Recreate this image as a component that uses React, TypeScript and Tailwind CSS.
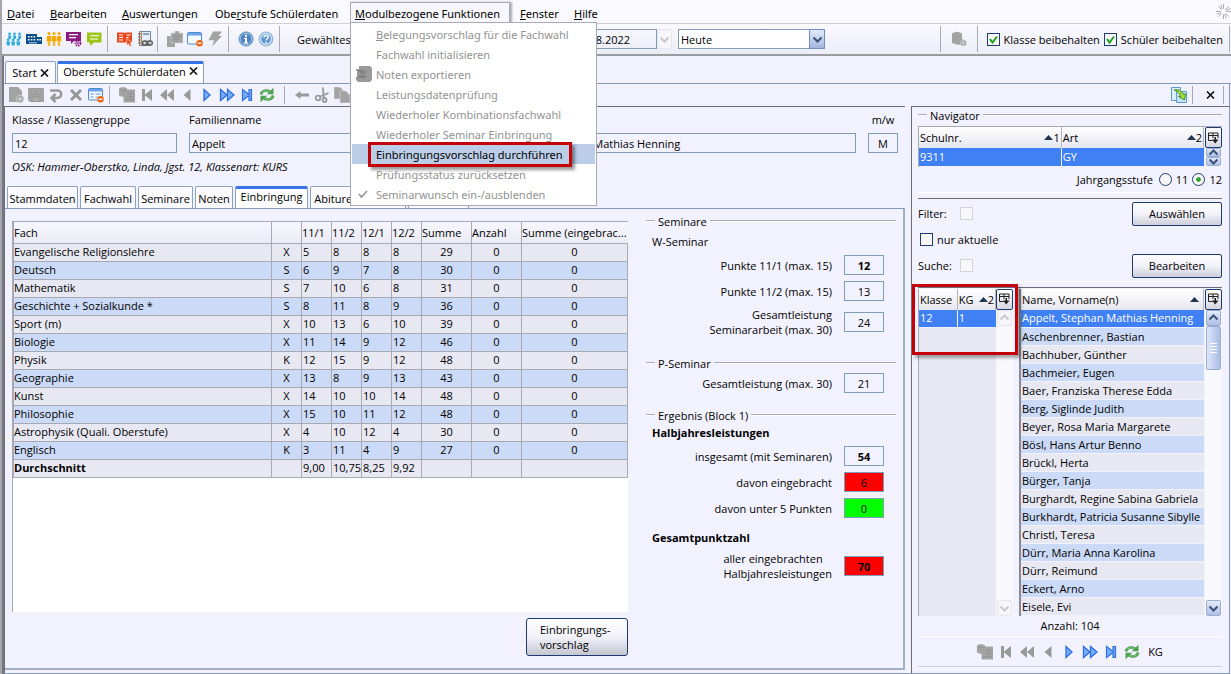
import type { ReactNode } from 'react';
import clsx from 'clsx';

const menus = [
  { name: 'Datei', width: 'w-[43px]' },
  { name: 'Bearbeiten', width: 'w-[72px]' },
  { name: 'Auswertungen', width: 'w-[93px]' },
  { name: 'Oberstufe Schülerdaten', width: 'w-[140px]' },
  { name: 'Modulbezogene Funktionen', width: 'w-[160px]' },
  { name: 'Fenster', width: 'w-[54px]' },
  { name: 'Hilfe', width: 'w-[40px]' },
];

const menuItems = [
  'Belegungsvorschlag für die Fachwahl',
  'Fachwahl initialisieren',
  'Noten exportieren',
  'Leistungsdatenprüfung',
  'Wiederholer Kombinationsfachwahl',
  'Wiederholer Seminar Einbringung',
  'Einbringungsvorschlag durchführen',
  'Prüfungsstatus zurücksetzen',
  'Seminarwunsch ein-/ausblenden',
];

const subjects: [string, string, number, number, number, number, number][] = [
  ['Evangelische Religionslehre', 'X', 5, 8, 8, 8, 29],
  ['Deutsch', 'S', 6, 9, 7, 8, 30],
  ['Mathematik', 'S', 7, 10, 6, 8, 31],
  ['Geschichte + Sozialkunde *', 'S', 8, 11, 8, 9, 36],
  ['Sport (m)', 'X', 10, 13, 6, 10, 39],
  ['Biologie', 'X', 11, 14, 9, 12, 46],
  ['Physik', 'K', 12, 15, 9, 12, 48],
  ['Geographie', 'X', 13, 8, 9, 13, 43],
  ['Kunst', 'X', 14, 10, 10, 14, 48],
  ['Philosophie', 'X', 15, 10, 11, 12, 48],
  ['Astrophysik (Quali. Oberstufe)', 'X', 4, 10, 12, 4, 30],
  ['Englisch', 'K', 3, 11, 4, 9, 27],
];

const students = [
  'Appelt, Stephan Mathias Henning',
  'Aschenbrenner, Bastian',
  'Bachhuber, Günther',
  'Bachmeier, Eugen',
  'Baer, Franziska Therese Edda',
  'Berg, Siglinde Judith',
  'Beyer, Rosa Maria Margarete',
  'Bösl, Hans Artur Benno',
  'Brückl, Herta',
  'Bürger, Tanja',
  'Burghardt, Regine Sabina Gabriela',
  'Burkhardt, Patricia Susanne Sibylle',
  'Christl, Teresa',
  'Dürr, Maria Anna Karolina',
  'Dürr, Reimund',
  'Eckert, Arno',
  'Eisele, Evi',
];

const GREY = '#a3a3a3';
const BLUE = '#2f6fe0';

const people = (color: string) => (
  <g fill={color}>
    {[3, 8, 13].map((x) => (
      <g key={x}>
        <circle cx={x} cy="2.5" r="1.5" />
        <path d={`M${x - 2} 5h4l.4 5h-1l-.4 5h-.8v-5h-.4v5h-.8l-.4-5h-1z`} />
      </g>
    ))}
  </g>
);

const windowMinus = (
  <>
    <rect x=".5" y="1.5" width="14" height="11.5" rx="1" fill="#f4f9ff" stroke="#4d8ad0" />
    <path d="M1 2h13v2.5H1z" fill="#6ba4e6" />
    <circle cx="12.5" cy="12.2" r="3.3" fill="#ea6413" />
    <path d="M10.5 11.6h4v1.2h-4z" fill="#fff" />
  </>
);

const icons: Record<string, ReactNode> = {
  team: (
    <g fill="#27a9dc">
      {[3, 8, 13].map((x) => (
        <g key={x}>
          <circle cx={x + 0.5} cy="2.8" r="1.3" />
          <path d={`M${x - 1} 4.5h3.2l-.5 3.5h-2z`} />
          <circle cx={x - 0.8} cy="8.8" r="1.4" />
          <path d={`M${x - 2.8} 10.5h4l-.6 4h-2.6z`} />
        </g>
      ))}
    </g>
  ),
  school: (
    <>
      <path d="M0 3h11v3h5v7H0z" fill="#074d8c" />
      <path d="M2 5h1.6v1.6H2zM4.8 5h1.6v1.6H4.8zM7.6 5h1.6v1.6H7.6zM2 8h1.6v1.6H2zM4.8 8h1.6v1.6H4.8zM7.6 8h1.6v1.6H7.6zM11 8h1.6v1.6H11zM13.4 8H15v1.6h-1.6zM3 11.5h8v.8H3z" fill="#fff" />
    </>
  ),
  parents: people('#f5a800'),
  chatGear: (
    <>
      <path d="M0 1h15v9H8l-3 3v-3H0z" fill="#8b1a83" />
      <path d="M3 3.6h9M3 6.6h7" stroke="#fff" strokeWidth="1.1" />
      <circle cx="12" cy="12.2" r="2.5" fill="none" stroke="#8b1a83" strokeWidth="1.8" strokeDasharray="1.5 .8" />
      <circle cx="12" cy="12.2" r="1.3" fill="#b45bae" />
    </>
  ),
  chat: (
    <>
      <path d="M1 1.5h14.5v10H8l-4 3.5v-3.5H1z" fill="#9dc419" />
      <path d="M4 4.8h9M4 8h8" stroke="#fff" strokeWidth="1.1" />
    </>
  ),
  book: (
    <>
      <path d="M0 1.5h7l.8.8.8-.8H15v10H0z" fill="#e8481b" />
      <path d="M2 4h4M2 6.5h4M2 9h4M9.5 4h4M9.5 6.5h2" stroke="#fff" />
      <path d="m9.5 7.5 6 4-2.4.6 1.4 2.6-1.7.8-1.4-2.6-1.6 1.7z" fill="#e8481b" stroke="#fff" strokeWidth=".5" />
    </>
  ),
  notebook: (
    <>
      <path d="M2.5.5h11v14h-11z" fill="#e7edf4" stroke="#72839b" />
      <path d="M4.5 1v13" stroke="#b08a60" />
      <path d="M1 3h3M1 6h3M1 9h3M1 12h3" stroke="#956339" strokeWidth="1.2" />
      <path d="M6 3h6" stroke="#6787a8" strokeWidth="1.5" />
      <rect x="5.5" y="10" width="5" height="4" rx="2" fill="#ddd" stroke="#555" strokeWidth="1.3" />
      <rect x="10.3" y="10" width="5" height="4" rx="2" fill="#ddd" stroke="#555" strokeWidth="1.3" />
      <path d="M8.5 12h4" stroke="#555" />
    </>
  ),
  cards: (
    <g fill={GREY}>
      <path d="M0 5h8v11H0z" />
      <path d="M4 2h4V0h4v2h4v10H4z" stroke="#d4d4dc" strokeWidth=".5" />
      <path d="M6 5h8M6 8h6" stroke="#8d8d8d" />
    </g>
  ),
  windowMinus,
  bolt: <path d="M6 .5h9L11.5 5H15L5 15.5l2.2-6.2H1.5z" fill={GREY} />,
  info: (
    <>
      <circle cx="8" cy="8" r="7.2" fill="#4e85c0" stroke="#8fb3d9" />
      <circle cx="8" cy="8" r="5.7" fill="none" stroke="#b6d0ec" strokeWidth=".8" />
      <path d="M7 3.8h2v2H7zM6.2 6.8H9v4.5h1v1.2H6v-1.2h1V8h-.8z" fill="#fff" />
    </>
  ),
  help: (
    <>
      <circle cx="8" cy="8" r="7" fill="#a9c8ea" stroke="#8fb3d9" />
      <circle cx="8" cy="8" r="5.3" fill="#5f97d2" stroke="#e3eefa" />
      <path d="M6 6.5c0-2.8 4.2-2.6 4.2-.2C10.2 7.8 8 7.8 8 9.6" fill="none" stroke="#fff" strokeWidth="1.4" />
      <circle cx="8" cy="11.6" r=".9" fill="#fff" />
    </>
  ),
  newDoc: (
    <g fill={GREY}>
      <path d="M1 0h9l4 4v7l-3 4H1z" />
      <circle cx="12" cy="12" r="3.7" stroke="#ddd" strokeWidth=".6" />
      <path d="M12 10v4M10 12h4" stroke="#e4e4ec" />
    </g>
  ),
  save: (
    <>
      <path d="M0 1h16v14H2l-2-2z" fill={GREY} />
      <path d="M3 1.5h10V7H3zM4 10h8v4.5H4z" fill="#adadad" stroke="#8f8f8f" strokeWidth=".7" />
      <path d="M4.5 3.2h7M4.5 5h7" stroke="#8f8f8f" strokeWidth=".7" />
    </>
  ),
  undo: <path d="M2 3.5h7.5a3.7 3.7 0 0 1 0 7.5H4M7.5 7l-4 4 4 4" fill="none" stroke="#9a9a9a" strokeWidth="2.6" />,
  remove: <path d="m3 3 10 10M13 3 3 13" stroke="#949494" strokeWidth="2.9" />,
  formMinus: (
    <>
      {windowMinus}
      <path d="M2.5 7h3M2.5 10h3M7.5 7h5M7.5 10h2" stroke="#5e94d5" />
    </>
  ),
  dbTable: (
    <>
      <path d="M5 2.5h11v13H4.5V9z" fill={GREY} />
      <path d="M8.5 6.5H15M8.5 9.5H15M6 12.5h9M11.500 5v9" stroke="#8f8f8f" strokeWidth=".7" />
      <path d="M0 2C0-.3 8-.3 8 2v6c0 2.3-8 2.3-8 0z" fill={GREY} />
      <path d="M.5 2.5c1 1.500 6 1.500 7 0" fill="none" stroke="#8c8c8c" strokeWidth=".7" />
    </>
  ),
  first: <path d="M3 2h3v5.5L13 2v12L6 8.5V14H3z" fill="#999" />,
  fastBack: <path d="M8 2v12L1 8zM15 2v12L8 8z" fill="#999" />,
  back: <path d="M11.5 2v12l-7-6z" fill="#999" />,
  next: <path d="M5 2.5v11L11 8z" fill="#78adf7" stroke={BLUE} strokeWidth="1.3" />,
  fastNext: <path d="M1.5 2.5v11L8 8zM8.5 2.5v11L15 8z" fill="#78adf7" stroke={BLUE} strokeWidth="1.3" />,
  last: <path d="M3.5 2.5v11l6.5-5v5h2.5v-11H10v5z" fill="#78adf7" stroke={BLUE} strokeWidth="1.2" />,
  refresh: (
    <>
      <g stroke="#4da04f" strokeWidth="2.8" fill="none">
        <path d="M1.8 7.5C3 3.3 7.5 2.6 11 4.8" />
        <path d="M14.2 8.5C13 12.7 8.5 13.4 5 11.2" />
      </g>
      <path d="M14.5.8v6.4H7.8zM1.5 15.2V8.8h6.7z" fill="#4da04f" />
      <path d="M2.5 6.5C4 3.8 7.5 3.2 10.5 4.8M13.5 9.5c-1.5 2.7-5 3.3-8 1.7" fill="none" stroke="#8ed18a" strokeWidth=".9" />
    </>
  ),
  arrowLeft: <path d="M1 8l5.5-4v2.500H15v3H6.5V12z" fill="#999" />,
  cut: (
    <g fill="none" stroke="#999" strokeWidth="1.8">
      <circle cx="4" cy="11" r="2.3" />
      <circle cx="10.5" cy="13" r="2" />
      <path d="M5.8 9.8 14.5 6M9.8 11 8.8.5" />
    </g>
  ),
  copy: (
    <g fill={GREY} stroke="#dadae4" strokeWidth=".6">
      <path d="M0 0h6l4 4v8H0z" />
      <path d="M6 4h6l4 4v8H6z" />
    </g>
  ),
  dbPlus: (
    <g fill={GREY}>
      <path d="M1 2.5Q6-1 11 2.5V8l4 3-4 3Q5 14 1 12z" />
      <circle cx="12.5" cy="12" r="3" stroke="#ddd" strokeWidth=".6" />
      <path d="M12.5 10.3v3.4M10.8 12h3.4" stroke="#ddd" strokeWidth=".8" />
    </g>
  ),
  link: (
    <>
      <path d="M.5.5h9v13h-9z" fill="#dcedfb" stroke="#5d9bce" />
      <path d="M5.5 4.5h10v11h-10z" fill="#c7e1f7" stroke="#5d9bce" />
      <path d="M3 3q7-1.5 9 4h2.5l-1 6-6-3.5h2Q8.5 5 3 3z" fill="#a2dd3b" stroke="#3a8c24" strokeWidth=".9" />
    </>
  ),
  export: (
    <>
      <path d="M3 0h11l2 2v12l-2 2H2l-2-2v-3h1V5H0V3h3z" fill="#9a9a9a" />
      <path d="m3 5 7 6M10 5l-7 6M2 5h6M2 11h8" stroke="#7f7f7f" strokeWidth="1.5" />
    </>
  ),
};

function Icon({ name }: { name: string }) {
  return (
    <svg width="16" height="16" viewBox="0 0 16 16" className="shrink-0" aria-hidden="true">
      {icons[name]}
    </svg>
  );
}

function IconBar({ names, wide }: { names: string[]; wide?: boolean }) {
  return (
    <div className={clsx('flex items-center', wide ? 'gap-[5px]' : 'gap-1')}>
      {names.map((name) => (
        <button key={name} type="button" aria-label={name} className="flex">
          <Icon name={name} />
        </button>
      ))}
    </div>
  );
}

function Separator() {
  return <div className="w-px self-stretch bg-[#a9a9b3]" />;
}

function Chevron({ up, disabled }: { up?: boolean; disabled?: boolean }) {
  return (
    <svg width="9" height="7" viewBox="0 0 9 7" aria-hidden="true">
      <path d={up ? 'M.5 5.5l4-4 4 4' : 'M.5 1.5l4 4 4-4'} fill="none" stroke={disabled ? '#c9c9cf' : '#3d5279'} strokeWidth="2" />
    </svg>
  );
}

function ArrowButton({ up, disabled, className }: { up?: boolean; disabled?: boolean; className?: string }) {
  return (
    <button
      type="button"
      aria-label={up ? 'Nach oben' : 'Nach unten'}
      className={clsx(
        'flex w-[15px] shrink-0 items-center justify-center rounded-[2px] border',
        disabled ? 'border-[#e6e6ec] bg-[#f6f6fa]' : 'border-[#9aaed4] bg-linear-to-b from-[#e3ebfa] to-[#afbfe3]',
        className,
      )}
    >
      <Chevron up={up} disabled={disabled} />
    </button>
  );
}

function SortMark({ index }: { index?: string }) {
  return (
    <span className="flex items-center">
      <svg width="9" height="5" viewBox="0 0 9 5" aria-hidden="true">
        <path d="M0 5 4.5 0 9 5z" fill="#1f3550" />
      </svg>
      {index}
    </span>
  );
}

function ColumnButton() {
  return (
    <button
      type="button"
      aria-label="Spalten"
      className="flex h-[21px] w-[17px] shrink-0 items-center justify-center rounded-[2px] border border-[#1d3b70] bg-linear-to-b from-white to-[#d6d6e2]"
    >
      <svg width="11" height="12" viewBox="0 0 11 12" aria-hidden="true">
        <path d="M.5 1h9.500v5M.5 1v7.500h4M.5 3.500h9.500M5 1v5" fill="none" stroke="#222" />
        <path d="M4 7.500h6.500L7.200 11.500zM6.500 5h1.500v3H6.500z" fill="#222" />
      </svg>
    </button>
  );
}

// Group heading with a rule on both sides
function Legend({ children }: { children: ReactNode }) {
  return (
    <div className="flex h-4 items-center gap-[3px]">
      <div className="h-[2px] w-[9px] border-t border-b border-t-[#a9a9b3] border-b-white" />
      <h2>{children}</h2>
      <div className="h-[2px] flex-1 border-t border-b border-t-[#a9a9b3] border-b-white" />
    </div>
  );
}

function Points({ id, label, value, bold, className }: { id: string; label: ReactNode; value: string; bold?: boolean; className?: string }) {
  return (
    <div className="flex items-center justify-end gap-3 pr-3">
      <label htmlFor={id}>{label}</label>
      <input
        id={id}
        readOnly
        value={value}
        className={clsx('h-5 w-10 border border-[#7f9db9] text-center', bold && 'font-bold', className)}
      />
    </div>
  );
}

function Tick({ id, label, checked, disabled }: { id: string; label?: string; checked?: boolean; disabled?: boolean }) {
  return (
    <span className="flex items-center gap-1">
      <span className="relative flex">
        <input
          id={id}
          type="checkbox"
          defaultChecked={checked}
          disabled={disabled}
          className={clsx('size-[13px] appearance-none border', disabled ? 'border-[#d3d3d8] bg-[#f7f7fa]' : 'border-[#1d3b70] bg-[#f7f7f7]')}
        />
        {checked && (
          <svg viewBox="0 0 13 13" className="pointer-events-none absolute inset-0" aria-hidden="true">
            <path d="m3 6 2.500 3.500L10 3.500" fill="none" stroke="#21a121" strokeWidth="2" />
          </svg>
        )}
      </span>
      {label && <label htmlFor={id}>{label}</label>}
    </span>
  );
}

function Divider() {
  return <div className="h-[7px] border-t border-b border-t-white border-b-[#6e6e78]" />;
}

function MenuBar() {
  return (
    <nav className="flex h-6 border-b border-[#cfcfda] bg-[#f9f9fe] pt-[2px] font-['Noto_Sans',sans-serif]">
      {menus.map(({ name, width }, i) => (
        <div
          key={name}
          className={clsx(
            'relative shrink-0 border border-b-0',
            width,
            i === 4 ? 'mr-[5px] border-[#a9a9b8] bg-[#f6f6fc] shadow-[2px_0_2px_#aaaab4]' : 'border-transparent',
          )}
        >
          <button type="button" className="flex h-5 items-center pl-1 whitespace-nowrap">
            <span>
              {i === 3 ? (
                <>
                  Obe<u>r</u>stufe Schülerdaten
                </>
              ) : (
                <>
                  <u>{name[0]}</u>
                  {name.slice(1)}
                </>
              )}
            </span>
          </button>
          {i === 4 && <DropDown />}
        </div>
      ))}
      <svg width="15" height="15" viewBox="0 0 16 16" className="mt-[2px] ml-auto" aria-hidden="true">
        <path d="M8 0v5M8 11v5M0 8h5M11 8h5M2.500 2.500 6 6M10 10l3.500 3.500M2.500 13.500 6 10M10 6l3.500-3.500M5 .800l1.800 4.400M9.200 10.800 11 15.200M.800 11l4.400-1.800M10.800 6.800 15.200 5" stroke="#a6a6ab" />
      </svg>
    </nav>
  );
}

function DropDown() {
  return (
    <ul className="absolute top-[19px] -left-px z-20 w-[247px] border border-[#a9a9b8] bg-white p-px text-[#929292]">
      {menuItems.map((item, i) => (
        <li key={item}>
          <button type="button" className={clsx('relative flex h-5 w-full items-center', i === 6 && 'bg-[#bccde8] text-black')}>
            <span className="flex w-6 items-center pl-1">
              {i === 2 && <Icon name="export" />}
              {i === 8 && (
                <svg width="10" height="8" viewBox="0 0 10 8" className="ml-0.5" aria-hidden="true">
                  <path d="m1 4 2.500 3L9 1" fill="none" stroke="#999" strokeWidth="1.8" />
                </svg>
              )}
            </span>
            <span className="whitespace-nowrap">
              {i === 0 ? (
                <>
                  <u>B</u>
                  {item.slice(1)}
                </>
              ) : (
                item
              )}
            </span>
            {i === 6 && <span className="absolute -top-[2px] left-4 h-[25px] w-[204px] border-3 border-[#c40009] shadow-[3px_3px_3px_#0006]" />}
          </button>
        </li>
      ))}
    </ul>
  );
}

function MainToolbar() {
  return (
    <div className="flex h-8 items-center border-b-2 border-[#9b9ba2] bg-linear-to-b from-[#f9f9fe] to-[#ededf8] py-[2px] pl-[4px]">
      <IconBar names={['team', 'school', 'parents', 'chatGear', 'chat']} />
      <div className="flex items-center gap-[9px] self-stretch pl-[5px]">
        <Separator />
        <IconBar names={['book', 'notebook']} />
      </div>
      <div className="flex items-center gap-[9px] self-stretch pl-1">
        <Separator />
        <IconBar names={['cards', 'windowMinus', 'bolt']} />
      </div>
      <div className="flex items-center gap-[9px] self-stretch pl-[5px]">
        <Separator />
        <IconBar names={['info', 'help']} />
      </div>
      <div className="flex items-center gap-[17px] self-stretch pl-[5px]">
        <Separator />
        <label htmlFor="datum" className="w-[272px]">
          Gewähltes Datum
        </label>
      </div>
      <input id="datum" readOnly value="01.08.2022" className="h-5 w-[88px] border border-[#7f9db9] px-1" />
      <ArrowButton disabled className="h-5" />
      <div className="relative ml-[6px] flex">
        <select aria-label="Zeitpunkt" className="h-5 w-[147px] appearance-none border border-[#7f9db9] bg-white px-[2px]">
          <option>Heute</option>
        </select>
        <span className="pointer-events-none absolute top-0 right-0 flex h-5 w-4 items-center justify-center rounded-[2px] border border-[#6e8fc4] bg-linear-to-b from-[#e3ebfa] to-[#a3b5df]">
          <Chevron />
        </span>
      </div>
      <div className="ml-auto flex items-center self-stretch pr-px">
        <Separator />
        <div className="px-[10px]">
          <IconBar names={['dbPlus']} />
        </div>
        <Separator />
        <div className="flex gap-1 pr-[6px] pl-[9px]">
          <Tick id="keepClass" label="Klasse beibehalten" checked />
          <Tick id="keepStudent" label="Schüler beibehalten" checked />
        </div>
        <Separator />
      </div>
    </div>
  );
}

function CloseMark() {
  return (
    <svg width="9" height="8" viewBox="0 0 9 8" aria-hidden="true">
      <path d="m1 .5 7 7M8 .5l-7 7" stroke="#111" strokeWidth="1.6" />
    </svg>
  );
}

function WindowTabs() {
  return (
    <div className="flex items-end border-b border-[#8499b8] pt-[5px] pl-px">
      <button type="button" className="flex h-[22px] w-[51px] items-center justify-center gap-[3px] rounded-t-[2px] border border-b-0 border-[#8ba3c0] bg-[#fafaff]">
        Start <CloseMark />
      </button>
      <button type="button" className="ml-px flex h-[22px] w-[147px] items-start justify-center gap-[3px] rounded-t-[2px] border border-t-3 border-b-0 border-[#8ba3c0] border-t-[#3474e6] bg-white">
        Oberstufe Schülerdaten
        <span className="flex h-[13px] items-center">
          <CloseMark />
        </span>
      </button>
    </div>
  );
}

function WindowToolbar() {
  return (
    <div className="flex h-[22px] items-center pl-[4px]">
      <IconBar names={['newDoc', 'save', 'undo', 'remove', 'formMinus']} />
      <div className="flex items-center gap-[9px] self-stretch py-[2px] pl-[5px]">
        <Separator />
        <IconBar names={['dbTable', 'first', 'fastBack', 'back', 'next', 'fastNext', 'last', 'refresh']} />
      </div>
      <div className="flex items-center gap-[9px] self-stretch py-[2px] pl-[9px]">
        <Separator />
        <IconBar names={['arrowLeft', 'cut', 'copy']} />
      </div>
      <div className="ml-auto flex items-center self-stretch py-[2px] pr-[5px]">
        <div className="pr-[5px]">
          <IconBar names={['link']} />
        </div>
        <Separator />
        <button type="button" aria-label="Schließen" className="flex w-[30px] justify-center pl-1">
          <CloseMark />
        </button>
        <Separator />
      </div>
    </div>
  );
}

function StudentHeader() {
  return (
    <>
      <div className="flex gap-3 px-[7px] pt-[5px]">
        <div className="w-[165px]">
          <label htmlFor="klasse" className="block h-[21px] leading-4">
            Klasse / Klassengruppe
          </label>
          <input id="klasse" readOnly value="12" className="h-5 w-full border border-[#7f9db9] px-[2px]" />
        </div>
        <div className="flex-1">
          <label htmlFor="familienname" className="block h-[21px] leading-4">
            Familienname
          </label>
          <input id="familienname" readOnly value="Appelt" className="h-5 w-full border border-[#7f9db9] px-[2px]" />
        </div>
        <div className="w-[311px]">
          <label htmlFor="vorname" className="block h-[21px] leading-4">
            Vorname
          </label>
          <input id="vorname" readOnly value="Stephan Mathias Henning" className="h-5 w-full border border-[#7f9db9] px-[2px]" />
        </div>
        <div className="flex w-[30px] flex-col items-center">
          <label htmlFor="mw" className="block h-[21px] leading-4">
            m/w
          </label>
          <input id="mw" readOnly value="M" className="h-5 w-full border border-[#7f9db9] text-center" />
        </div>
      </div>
      <p className="px-[7px] pt-[6px] leading-4 italic">OSK: Hammer-Oberstko, Linda, Jgst. 12, Klassenart: KURS</p>
    </>
  );
}

const tabs = [
  { name: 'Stammdaten', width: 'w-[71px]' },
  { name: 'Fachwahl', width: 'w-[56px]' },
  { name: 'Seminare', width: 'w-[55px]' },
  { name: 'Noten', width: 'w-[38px]' },
  { name: 'Einbringung', width: 'w-[73px]', active: true },
  { name: 'Abiturergebnisse', width: 'w-[96px]' },
  { name: 'Zeugnisse', width: 'w-[61px]' },
];

function Tabs() {
  return (
    <div className="flex items-end gap-[2px] border-b border-[#8499b8] pt-[11px] pl-[2px]">
      {tabs.map((tab) => (
        <button
          key={tab.name}
          type="button"
          className={clsx(
            'flex h-[22px] shrink-0 justify-center rounded-t-[2px] border border-b-0 border-[#8ba3c0] whitespace-nowrap',
            tab.width,
            tab.active ? 'items-start border-t-3 border-t-[#3474e6] bg-white' : 'items-end bg-[#fafaff] pb-[2px]',
          )}
        >
          {tab.name}
        </button>
      ))}
    </div>
  );
}

const headCell = 'h-[21px] overflow-hidden border-l border-[#a9a9b3] bg-linear-to-b from-[#f6f6ff] to-[#ebebf4] text-left font-normal whitespace-nowrap';
const cell = 'h-[18px] border border-[#a9a9b3] leading-4 whitespace-nowrap';

function SubjectTable() {
  return (
    <div className="flex-1 border-t border-l border-[#a9a9b3] bg-white">
      <table className="w-full table-fixed border-collapse">
        <colgroup>
          <col />
          <col className="w-[30px]" />
          <col className="w-[30px]" />
          <col className="w-[30px]" />
          <col className="w-[30px]" />
          <col className="w-[30px]" />
          <col className="w-[50px]" />
          <col className="w-[50px]" />
          <col className="w-[106px]" />
        </colgroup>
        <thead>
          <tr>
            {['Fach', '', '11/1', '11/2', '12/1', '12/2', 'Summe', 'Anzahl', 'Summe (eingebrac...'].map((head, i) => (
              <th key={i} className={headCell}>
                {head}
              </th>
            ))}
          </tr>
        </thead>
        <tbody>
          {subjects.map(([name, kind, a, b, c, d, sum], i) => (
            <tr key={name} className={i % 2 ? 'bg-[#cbdaf6]' : 'bg-[#e8e8f2]'}>
              <td className={cell}>{name}</td>
              <td className={clsx(cell, 'text-center')}>{kind}</td>
              <td className={clsx(cell, 'pl-px')}>{a}</td>
              <td className={clsx(cell, 'pl-px')}>{b}</td>
              <td className={clsx(cell, 'pl-px')}>{c}</td>
              <td className={clsx(cell, 'pl-px')}>{d}</td>
              <td className={clsx(cell, 'text-center')}>{sum}</td>
              <td className={clsx(cell, 'text-center')}>0</td>
              <td className={clsx(cell, 'text-center')}>0</td>
            </tr>
          ))}
          <tr className="bg-[#e8e8f2]">
            <td className={clsx(cell, 'font-bold')}>Durchschnitt</td>
            <td className={cell} />
            <td className={clsx(cell, 'pl-px')}>9,00</td>
            <td className={clsx(cell, 'pl-px')}>10,75</td>
            <td className={clsx(cell, 'pl-px')}>8,25</td>
            <td className={clsx(cell, 'pl-px')}>9,92</td>
            <td className={cell} />
            <td className={cell} />
            <td className={cell} />
          </tr>
        </tbody>
      </table>
    </div>
  );
}

function Results() {
  return (
    <div className="flex w-[250px] shrink-0 flex-col">
      <Legend>Seminare</Legend>
      <p className="px-[6px] pt-[5px] leading-4">W-Seminar</p>
      <div className="flex flex-col gap-[6px] pt-[5px]">
        <Points id="w1" label="Punkte 11/1 (max. 15)" value="12" bold />
        <Points id="w2" label="Punkte 11/2 (max. 15)" value="13" />
        <Points
          id="w3"
          label={
            <span className="block text-right">
              Gesamtleistung
              <br />
              Seminararbeit (max. 30)
            </span>
          }
          value="24"
        />
      </div>
      <div className="pt-[18px] pb-[2px]">
        <Legend>P-Seminar</Legend>
      </div>
      <Points id="p1" label="Gesamtleistung (max. 30)" value="21" />
      <div className="pt-[14px]">
        <Legend>Ergebnis (Block 1)</Legend>
      </div>
      <h3 className="px-[6px] pt-[2px] leading-4 font-bold">Halbjahresleistungen</h3>
      <div className="flex flex-col gap-[6px] pt-[5px]">
        <Points id="e1" label="insgesamt (mit Seminaren)" value="54" bold />
        <Points id="e2" label="davon eingebracht" value="6" className="bg-[#ff0000]" />
        <Points id="e3" label="davon unter 5 Punkten" value="0" className="bg-[#00ff00]" />
      </div>
      <h3 className="px-[6px] pt-3 pb-[5px] leading-4 font-bold">Gesamtpunktzahl</h3>
      <Points
        id="g1"
        label={
          <>
            aller eingebrachten
            <br />
            Halbjahresleistungen
          </>
        }
        value="70"
        bold
        className="bg-[#ff0000]"
      />
    </div>
  );
}

const navHead = 'h-[21px] border-r border-[#b5b5c0] bg-linear-to-b from-white to-[#e6e6f0] px-px text-left font-normal whitespace-nowrap';
const navCell = 'h-[18px] border-b border-[#f2f2ff] px-px leading-4 whitespace-nowrap';
const navButton = 'h-6 w-[90px] rounded-[2px] border border-[#1d3b70] bg-linear-to-b from-white via-[#f1f1f8] to-[#cfcfdb]';
const radio = 'size-[13px] appearance-none rounded-full border border-[#1d3b70] bg-[#f7f7f7]';

function Navigator() {
  return (
    <aside className="flex w-[318px] shrink-0 flex-col border-t border-l border-[#6e6e78] pr-[7px] pl-[6px]">
      <Legend>Navigator</Legend>
      <div className="mt-[3px] flex gap-px border-t border-l border-[#a9a9b3]">
        <table className="flex-1 table-fixed border-collapse self-start">
          <thead>
            <tr>
              {['Schulnr.', 'Art'].map((head, i) => (
                <th key={head} className={clsx(navHead, 'w-1/2')}>
                  <span className="flex items-center justify-between">
                    {head}
                    <SortMark index={String(i + 1)} />
                  </span>
                </th>
              ))}
            </tr>
          </thead>
          <tbody>
            <tr className="bg-[#3f80f5] text-white">
              <td className={clsx(navCell, 'border-r')}>9311</td>
              <td className={navCell}>GY</td>
            </tr>
          </tbody>
        </table>
        <div className="flex flex-col items-center">
          <ColumnButton />
          <ArrowButton up className="h-[9px]" />
          <ArrowButton className="h-[9px]" />
        </div>
      </div>
      <div role="radiogroup" aria-label="Jahrgangsstufe" className="flex h-[25px] items-center justify-end gap-1">
        <span className="pr-[2px]">Jahrgangsstufe</span>
        <input id="j11" type="radio" name="stufe" className={radio} />
        <label htmlFor="j11">11</label>
        <input
          id="j12"
          type="radio"
          name="stufe"
          defaultChecked
          className={clsx(radio, 'bg-radial from-[#2aa52a] from-25% to-[#f7f7f7] to-35%')}
        />
        <label htmlFor="j12">12</label>
      </div>
      <Divider />
      <div className="grid grid-cols-[42px_1fr_90px] items-center pt-[3px] pb-[3px]">
        <label htmlFor="filter">Filter:</label>
        <Tick id="filter" disabled />
        <button type="button" className={navButton}>
          Auswählen
        </button>
        <div className="col-span-3 flex h-7 items-center pl-[2px]">
          <Tick id="aktuell" label="nur aktuelle" />
        </div>
        <label htmlFor="suche">Suche:</label>
        <Tick id="suche" disabled />
        <button type="button" className={navButton}>
          Bearbeiten
        </button>
      </div>
      <Divider />
      <div className="relative flex flex-1 gap-[6px] pt-px">
        <div className="flex border-l border-[#a9a9b3]">
          <div className="w-[77px] bg-[#e8e8f2]">
            <table className="w-full table-fixed border-collapse">
              <thead>
                <tr>
                  <th className={navHead}>Klasse</th>
                  <th className={navHead}>
                    <span className="flex items-center justify-between">
                      KG
                      <SortMark index="2" />
                    </span>
                  </th>
                </tr>
              </thead>
              <tbody>
                <tr className="bg-[#3f80f5] text-white">
                  <td className={clsx(navCell, 'border-r')}>12</td>
                  <td className={navCell}>1</td>
                </tr>
              </tbody>
            </table>
          </div>
          <div className="flex flex-col items-center bg-[#f9f9fd]">
            <ColumnButton />
            <ArrowButton up disabled className="h-4" />
            <ArrowButton disabled className="mt-auto h-4" />
          </div>
        </div>
        <div className="flex flex-1 gap-px border-l-2 border-[#8a8a92]">
          <table className="flex-1 table-fixed border-collapse self-start">
            <thead>
              <tr>
                <th className={navHead}>
                  <span className="flex items-center justify-between pr-[3px]">
                    Name, Vorname(n)
                    <SortMark />
                  </span>
                </th>
              </tr>
            </thead>
            <tbody>
              {students.map((student, i) => (
                <tr key={student} className={i === 0 ? 'bg-[#3f80f5] text-white' : i % 2 ? 'bg-[#cbdaf6]' : 'bg-[#e8e8f2]'}>
                  <td className={navCell}>{student}</td>
                </tr>
              ))}
            </tbody>
          </table>
          <div className="flex flex-col items-center bg-[#f9f9fd]">
            <ColumnButton />
            <ArrowButton up className="h-4" />
            <div className="flex h-[44px] w-[15px] flex-col items-center justify-center gap-[2px] rounded-[2px] border border-[#9aaed4] bg-linear-to-r from-[#dfe8fa] to-[#a9bce6]">
              <div className="h-px w-[7px] bg-white" />
              <div className="h-px w-[7px] bg-white" />
              <div className="h-px w-[7px] bg-white" />
              <div className="h-px w-[7px] bg-white" />
            </div>
            <ArrowButton className="mt-auto h-4" />
          </div>
        </div>
        <div className="pointer-events-none absolute -top-1 -left-[6px] h-[71px] w-[106px] border-3 border-[#c40009] shadow-[3px_3px_3px_#0005]" />
      </div>
      <p className="border-b border-white py-[2px] text-center leading-4">Anzahl: 104</p>
      <div className="mb-[6px] flex h-[30px] items-center justify-center gap-2 border-b border-[#d0d0da]">
        <IconBar wide names={['dbTable', 'first', 'fastBack', 'back', 'next', 'fastNext', 'last', 'refresh']} />
        <span>KG</span>
      </div>
    </aside>
  );
}

export default function App() {
  return (
    <div className="flex min-h-screen flex-col border-l-2 border-[#a5a5ad] bg-[#f2f2ff] font-['Open_Sans',sans-serif] text-[11px] leading-[15px] text-black">
      <MenuBar />
      <MainToolbar />
      <div className="flex flex-1 flex-col border-l-2 border-[#77777f]">
        <WindowTabs />
        <div className="mr-px mb-px flex flex-1 flex-col border-r border-b border-[#8499b8]">
          <WindowToolbar />
          <div className="flex flex-1 gap-[6px]">
            <main className="flex flex-1 flex-col border-t border-l border-[#6e6e78] pb-[3px]">
              <StudentHeader />
              <Tabs />
              <div className="flex flex-1 gap-[18px] border-r-2 border-b-2 border-[#a0b0c8] pr-[7px] pl-[7px]">
                <div className="flex flex-1 flex-col pt-3 pb-3">
                  <SubjectTable />
                  <button
                    type="button"
                    className="mt-[6px] h-[38px] w-[102px] self-end rounded-[3px] border border-[#1d3b70] bg-linear-to-b from-white via-[#f1f1f8] to-[#c6c6d2] pl-[13px] text-left"
                  >
                    Einbringungs-
                    <br />
                    vorschlag
                  </button>
                </div>
                <div className="flex pt-1">
                  <Results />
                </div>
              </div>
            </main>
            <Navigator />
          </div>
        </div>
      </div>
    </div>
  );
}
